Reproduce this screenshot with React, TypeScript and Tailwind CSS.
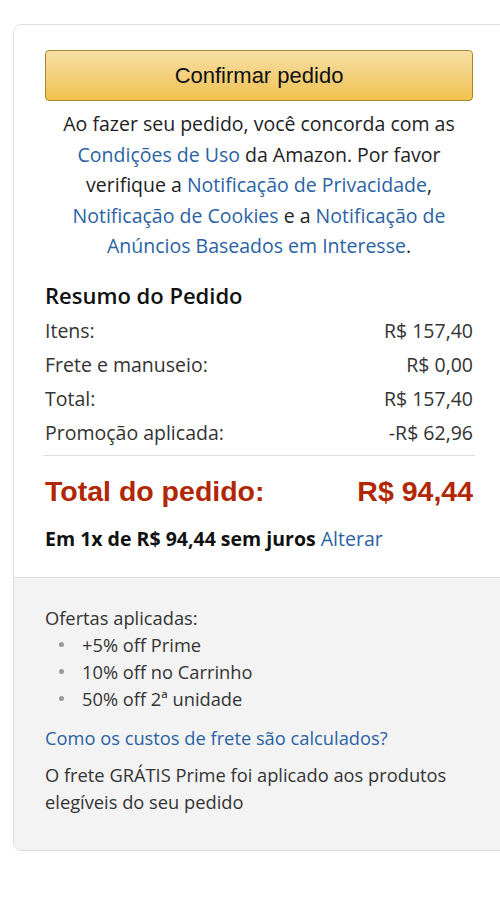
import React from "react";

const body = { fontFamily: '"Open Sans", "Noto Sans", Arial, sans-serif' };
const arial = { fontFamily: '"Liberation Sans", Arial, sans-serif' };

function Row({ label, value }: { label: string; value: string }) {
  return (
    <div className="flex justify-between items-center h-[34px] text-[19.5px] text-[#333]">
      <span>{label}</span>
      <span>{value}</span>
    </div>
  );
}

const link = "text-[#2a62a4]";

export default function App() {
  return (
    <div className="w-[500px] h-[918px] overflow-hidden bg-white" style={body}>
      <div className="ml-[13px] mt-[24px] w-[510px] border border-[#dddddd] rounded-[8px] overflow-hidden">
        <div className="pl-[31px] pt-[25px] pb-[26px] bg-white">
          <div className="w-[428px]">
            <button
              className="w-full h-[51px] rounded-[4px] border border-[#a88734] bg-gradient-to-b from-[#f7dfa5] to-[#f0c14b] text-[22px] text-[#111]"
              style={arial}
            >
              Confirmar pedido
            </button>
            <p className="mt-[8px] text-center text-[19.5px] leading-[30.5px] text-[#222] whitespace-nowrap">
              Ao fazer seu pedido, você concorda com as
              <br />
              <span className={link}>Condições de Uso</span> da Amazon. Por favor
              <br />
              verifique a <span className={link}>Notificação de Privacidade</span>,
              <br />
              <span className={link}>Notificação de Cookies</span> e a{" "}
              <span className={link}>Notificação de</span>
              <br />
              <span className={link}>Anúncios Baseados em Interesse</span>.
            </p>
            <h3 className="mt-[16px] mb-[2px] text-[22px] font-semibold text-[#111] leading-[34px]">Resumo do Pedido</h3>
            <Row label="Itens:" value="R$ 157,40" />
            <Row label="Frete e manuseio:" value="R$ 0,00" />
            <Row label="Total:" value="R$ 157,40" />
            <Row label="Promoção aplicada:" value="-R$ 62,96" />
            <div className="mt-[5px] border-t border-[#dddddd] -mx-[2px]" />
            <div className="flex justify-between items-center h-[71px] text-[#b12704] font-bold text-[28.5px]" style={arial}>
              <span>Total do pedido:</span>
              <span>R$ 94,44</span>
            </div>
            <div className="text-[19.5px] text-[#111] leading-[24px] whitespace-nowrap">
              <span className="font-bold">Em 1x de R$ 94,44 sem juros</span>{" "}
              <span className={link}>Alterar</span>
            </div>
          </div>
        </div>
        <div className="border-t border-[#dddddd] bg-[#f3f3f3] pl-[31px] pt-[26px] pb-[35px]">
          <div className="w-[428px] text-[18.3px] text-[#333]">
            <div className="leading-[27px]">Ofertas aplicadas:</div>
            <ul className="leading-[27px]">
              {["+5% off Prime", "10% off no Carrinho", "50% off 2ª unidade"].map((t) => (
                <li key={t} className="flex items-center">
                  <span className="w-[5px] h-[5px] rounded-full bg-[#999] ml-[14px] mr-[18px]" />
                  {t}
                </li>
              ))}
            </ul>
            <div className={`mt-[12px] leading-[27px] ${link}`}>Como os custos de frete são calculados?</div>
            <div className="mt-[10px] leading-[27px] whitespace-nowrap">
              O frete GRÁTIS Prime foi aplicado aos produtos
              <br />
              elegíveis do seu pedido
            </div>
          </div>
        </div>
      </div>
    </div>
  );
}
